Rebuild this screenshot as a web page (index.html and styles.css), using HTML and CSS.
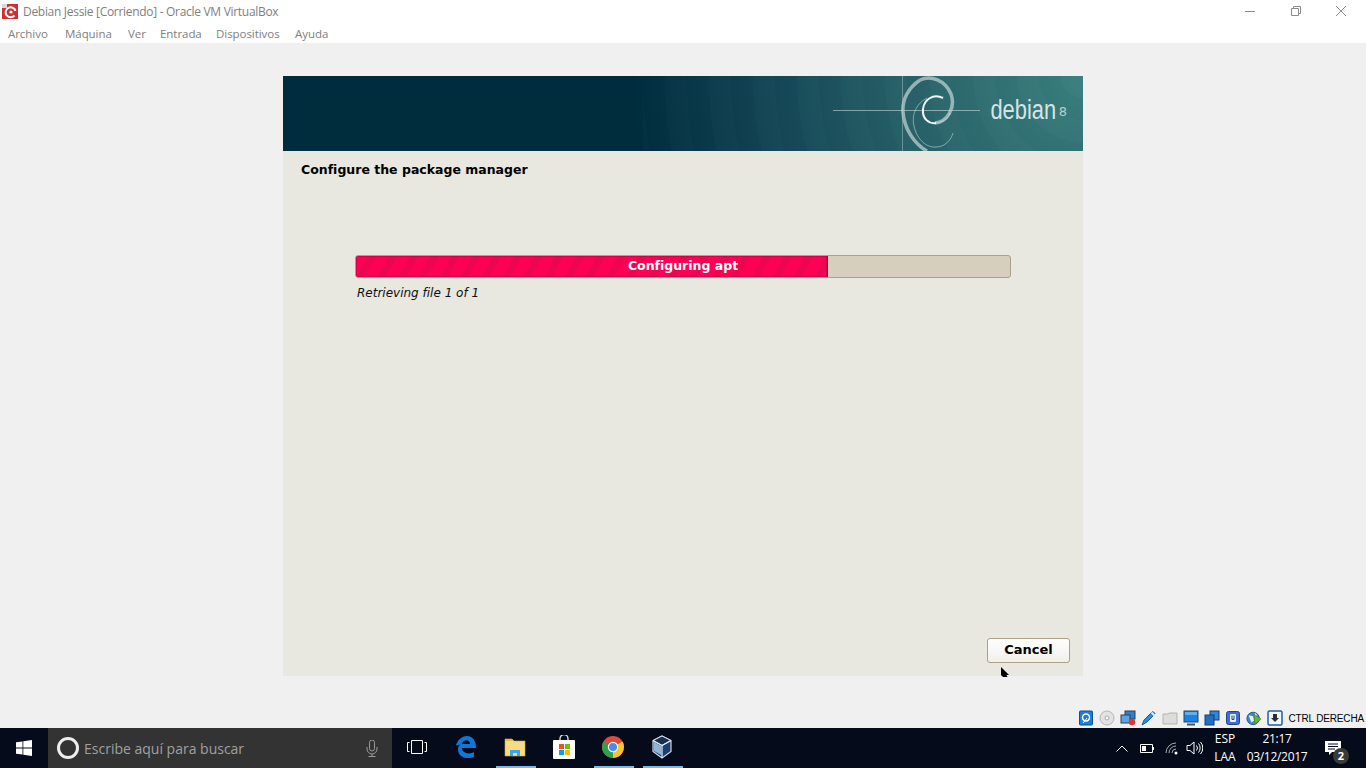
FILE: index.html
```html
<!DOCTYPE html>
<html lang="es">
<head>
    <meta charset="UTF-8" />
    <meta name="viewport" content="width=1366, height=768" />
    <title>Debian Jessie [Corriendo] - Oracle VM VirtualBox</title>
    <link rel="stylesheet" href="styles.css">
</head>
<body>
    <div class="titlebar">
        <svg class="app-icon" width="16" height="16" viewBox="0 0 16 16">
            <rect x="0" y="1" width="16" height="15" fill="#c9322e"/>
            <rect x="0" y="1" width="5" height="4" fill="#d8d8d8"/>
            <path d="M12.500 12.500a5 5 0 1 1 1-4.500" fill="none" stroke="#fff" stroke-width="2"/>
            <circle cx="9" cy="9" r="1.600" fill="#fff"/>
        </svg>
        <span class="title-text">Debian Jessie [Corriendo] - Oracle VM VirtualBox</span>
        <div class="window-buttons">
            <svg class="win-btn" width="12" height="12" viewBox="0 0 12 12"><path d="M1 6.500h10" stroke="#8a8a8a" fill="none"/></svg>
            <svg class="win-btn" width="12" height="12" viewBox="0 0 12 12"><path d="M1.500 3.500h7v7h-7zM3.500 3.500v-2h7v7h-2" stroke="#8a8a8a" fill="none"/></svg>
            <svg class="win-btn" width="12" height="12" viewBox="0 0 12 12"><path d="M1 1l10 10M11 1L1 11" stroke="#8a8a8a" fill="none"/></svg>
        </div>
    </div>

    <div class="menubar">
        <span>Archivo</span>
        <span>Máquina</span>
        <span>Ver</span>
        <span>Entrada</span>
        <span>Dispositivos</span>
        <span>Ayuda</span>
    </div>

    <div class="vm-area">
        <div class="screen">
            <div class="banner">
                <svg class="banner-art" width="800" height="75" viewBox="0 0 800 75">
                    <g fill="none" stroke="#ffffff">
                        <path d="M550 34.500H697" stroke-opacity=".45"/>
                        <path d="M619.500 0V75" stroke-opacity=".3"/>
                        <path d="M637 4C625 12 619 24 620 36C621 52 631 68 644 75" stroke="#b9cfcf" stroke-width="3.500" stroke-opacity=".75"/>
                        <path d="M637 4C648 -1 662 4 668 18C673 32 664 46 652 47" stroke="#c3d6d6" stroke-width="3.500" stroke-opacity=".7"/>
                        <path d="M660 22C650 17 641 24 640 33C639 43 646 48 653 47" stroke="#f2f7f6" stroke-width="2"/>
                        <path d="M653 47C660 46 666 42 667 37" stroke="#dce8e8" stroke-opacity=".5"/>
                        <path d="M644 22C634 27 628 38 631 50C634 64 644 72 653 71C662 71 668 64 670 57" stroke="#cfdede" stroke-opacity=".55"/>
                    </g>
                </svg>
                <span class="brand">debian</span><span class="brand-version">8</span>
            </div>
            <div class="installer">
                <h1>Configure the package manager</h1>
                <div class="progress-block">
                    <div class="progress">
                        <div class="progress-fill"></div>
                        <span class="progress-label">Configuring apt</span>
                    </div>
                    <p class="progress-info">Retrieving file 1 of 1</p>
                </div>
                <div class="actions">
                    <button class="cancel" type="button">Cancel</button>
                </div>
            </div>
        </div>
        <svg class="pointer" width="9" height="10" viewBox="0 0 9 10"><path d="M0 0l8 8H5.500l1 2H2L0 8z" fill="#000"/></svg>
    </div>

    <div class="statusbar">
        <svg class="st-icon" width="16" height="16" viewBox="0 0 16 16"><rect x="1.500" y="1" width="13" height="14" rx="1" fill="#1d7fd6" stroke="#0c4f99"/><circle cx="8" cy="7.500" r="3.500" fill="none" stroke="#fff" stroke-width="1.500"/><path d="M5 13l4-5" stroke="#fff"/></svg>
        <svg class="st-icon" width="16" height="16" viewBox="0 0 16 16"><circle cx="8" cy="8" r="7" fill="#e2e2e2" stroke="#b5b5b5"/><circle cx="8" cy="8" r="2" fill="#f8f8f8" stroke="#aaa"/></svg>
        <svg class="st-icon" width="16" height="16" viewBox="0 0 16 16"><rect x="5" y="1" width="10" height="8" fill="#2f7fd0" stroke="#33414f"/><rect x="1" y="5" width="9" height="8" fill="#5aa3e4" stroke="#33414f"/><circle cx="12" cy="12" r="3.200" fill="#e5342a"/></svg>
        <svg class="st-icon" width="16" height="16" viewBox="0 0 16 16"><path d="M1 15l2-5 8-8c1-1 3 1 3 2l-8 8z" fill="#2b8be0" stroke="#1a5fa8"/><path d="M10.500 2.500l3 3" stroke="#dfeefa" stroke-width="2"/></svg>
        <svg class="st-icon" width="16" height="16" viewBox="0 0 16 16"><path d="M1 14V4h5l1-1h8v11z" fill="#dcdcd8" stroke="#b4b4b0"/></svg>
        <svg class="st-icon" width="16" height="16" viewBox="0 0 16 16"><rect x="1" y="1" width="14" height="11" fill="#1a82e0" stroke="#27475f"/><path d="M2 2h12v3H2z" fill="#5cb0f2"/><path d="M4 14.500h8" stroke="#44566a" stroke-width="2"/></svg>
        <svg class="st-icon" width="16" height="16" viewBox="0 0 16 16"><rect x="6" y="1" width="9" height="9" fill="#2f86db" stroke="#1c3d66"/><rect x="1" y="5" width="9" height="10" fill="#1f6fc4" stroke="#1c3d66"/></svg>
        <svg class="st-icon" width="16" height="16" viewBox="0 0 16 16"><rect x="1.500" y="1.500" width="13" height="13" rx="2" fill="#3d6fd0" stroke="#24438a"/><rect x="5" y="4" width="6" height="8" rx="1" fill="#e9f0fb"/><path d="M7 5.500v4h2v-4" fill="none" stroke="#24438a"/></svg>
        <svg class="st-icon" width="16" height="16" viewBox="0 0 18 18"><circle cx="8" cy="9.500" r="7" fill="#3e86d2" stroke="#1f4f86"/><path d="M3 6l5 1 1 5-3 2zM10 3l3 3-3 1z" fill="#e8eff6"/><path d="M9 5l8 5-7 6z" fill="#6cb52d" stroke="#3c7a12" stroke-width=".6"/></svg>
        <svg class="st-icon" width="16" height="16" viewBox="0 0 16 16"><rect x="1" y="1" width="14" height="14" rx="1.500" fill="#f2f5f9" stroke="#1f5f9e" stroke-width="1.500"/><path d="M6 4h4v4h2l-4 4-4-4h2z" fill="#22303e"/></svg>
        <span class="host-key">CTRL DERECHA</span>
    </div>

    <div class="taskbar">
        <div class="start">
            <svg width="16" height="16" viewBox="0 0 16 16"><path d="M0 2.300l6.500-.9v6.200H0zM7.300 1.300L16 0v7.600H7.300zM0 8.400h6.500v6.200L0 13.700zM7.300 8.400H16V16l-8.700-1.200z" fill="#fff"/></svg>
        </div>
        <div class="search">
            <span class="cortana"></span>
            <span class="search-text">Escribe aquí para buscar</span>
            <svg class="mic" width="12" height="17" viewBox="0 0 12 17"><path d="M3.500 2.500a2.500 2.500 0 0 1 5 0v6a2.500 2.500 0 0 1-5 0zM1 7v2a5 5 0 0 0 10 0V7M6 14v2.500M2.500 16.500h7" fill="none" stroke="#9a9a9a"/></svg>
        </div>
        <div class="task-item">
            <svg width="20" height="14" viewBox="0 0 20 14"><path d="M4.500.5h11v13h-11zM2.500 2.500h-2v9h2M17.500 2.500h2v9h-2" fill="none" stroke="#fff"/></svg>
        </div>
        <div class="task-item edge">
            <svg width="21" height="22" viewBox="0 0 21 22"><path d="M1 9C3 3 8 0 12 0c6 0 9 5 9 12H7c0 5 7 7 12 4v5c-8 3-16 0-16-8 0-2 1-4 3-5-2 1-4 2-5 1zM7 8h8c0-5-7-5-8 0z" fill="#0f78d4"/></svg>
        </div>
        <div class="task-item active">
            <svg width="22" height="20" viewBox="0 0 22 20"><path d="M1 2h7l2 2h11v15H1z" fill="#f8dc84" stroke="#c7a94c" stroke-width=".6"/><path d="M1 2h7l1 2H1z" fill="#e7b93f"/><path d="M6 19v-6h10v6h-3v-3H9v3z" fill="#3aa6e8"/></svg>
        </div>
        <div class="task-item">
            <svg width="24" height="24" viewBox="0 0 24 24"><path d="M8 6V3.500a4 4 0 0 1 8 0V6" fill="none" stroke="#e8e8e8" stroke-width="1.300"/><rect x="1" y="5" width="22" height="19" rx="1" fill="#fff"/><rect x="7" y="9" width="5" height="5" fill="#f25022"/><rect x="13" y="9" width="5" height="5" fill="#7fba00"/><rect x="7" y="15" width="5" height="5" fill="#00a4ef"/><rect x="13" y="15" width="5" height="5" fill="#ffb900"/></svg>
        </div>
        <div class="task-item active">
            <svg width="22" height="22" viewBox="0 0 22 22"><circle cx="11" cy="11" r="11" fill="#dd4b3e"/><path d="M11 11L20.500 5.500A11 11 0 0 1 11 22z" fill="#f6c42d"/><path d="M11 11L11 22A11 11 0 0 1 1.500 5.500z" fill="#2ea14f"/><circle cx="11" cy="11" r="5.200" fill="#fff"/><circle cx="11" cy="11" r="4" fill="#4a8af0"/></svg>
        </div>
        <div class="task-item active">
            <svg width="22" height="24" viewBox="0 0 22 24"><path d="M11 1l9 4.500v11L11 23l-9-6.500v-11z" fill="#1d3f6e" stroke="#cfd8e2" stroke-width="1.200"/><path d="M11 1l9 4.500-9 5-9-5z" fill="#16304f" stroke="#dfe6ee"/><path d="M11 10.500V23M11 10.500L2 5.500M11 10.500l9-5" stroke="#e8edf2" stroke-width="1.200"/><path d="M3 7l7 4v9l-7-4z" fill="#8fb4d8"/></svg>
        </div>

        <div class="tray">
            <svg class="tray-chevron" width="12" height="7" viewBox="0 0 12 7"><path d="M.5 6.500L6 1l5.500 5.500" fill="none" stroke="#fff"/></svg>
            <svg class="tray-battery" width="15" height="9" viewBox="0 0 15 9"><path d="M.5.500h12v8H.5z" fill="none" stroke="#fff"/><path d="M2 2h4v5H2z" fill="#fff"/><path d="M13.500 3v3" stroke="#fff"/></svg>
            <svg class="tray-wifi" width="14" height="14" viewBox="0 0 14 14"><path d="M7 12A4 4 0 0 1 11 8M4 12A7 7 0 0 1 11 5M1 12A10 10 0 0 1 11 2" fill="none" stroke="#a8adb2"/><circle cx="11" cy="12" r="1.500" fill="#fff"/></svg>
            <svg class="tray-volume" width="17" height="14" viewBox="0 0 17 14"><path d="M1 4.500h3L8 1v12L4 9.500H1zM10.500 4.500a4 4 0 0 1 0 5M12.500 2.500a7 7 0 0 1 0 9M14.500 1a9 9 0 0 1 0 12" fill="none" stroke="#fff"/></svg>
            <div class="tray-lang"><span>ESP</span><span>LAA</span></div>
            <div class="tray-clock"><span>21:17</span><span>03/12/2017</span></div>
            <div class="tray-notify">
                <svg width="16" height="15" viewBox="0 0 16 15"><path d="M0 0h16v11H7l-3 3v-3H0z" fill="#fff"/><path d="M3 3h10M3 5.500h10M3 8h7" stroke="#050b1a"/></svg>
                <span class="notify-badge">2</span>
            </div>
        </div>
    </div>
</body>
</html>
```

FILE: styles.css
```css
:root {
    --window-bg: #f0f0f0;
    --taskbar: #050b1a;
    --screen: #e8e7e0;
    --faded: #808080;
    --crimson: #ff0055;
}

* {
    box-sizing: border-box;
}

body {
    margin: 0;
    width: 1366px;
    height: 768px;
    overflow: hidden;
    display: flex;
    flex-direction: column;
    background-color: var(--window-bg);
    font-family: "Open Sans", "Noto Sans", sans-serif;
}

.titlebar {
    height: 22px;
    background-color: #fff;
    display: flex;
    align-items: center;
    padding-left: 2px;
    color: var(--faded);
    font-size: 12px;
}

.app-icon {
    margin-right: 5px;
}

.title-text {
    letter-spacing: -0.3px;
}

.window-buttons {
    margin-left: auto;
    display: flex;
    gap: 33.5px;
    padding-right: 19px;
}

.menubar {
    height: 21px;
    background-color: #fff;
    display: grid;
    grid-template-columns: 57px 63px 32px 56px 79px auto;
    align-items: center;
    padding: 2px 0 0 8px;
    color: var(--faded);
    font-size: 11.5px;
    letter-spacing: -0.05px;
}

.vm-area {
    height: 665px;
    position: relative;
    display: flex;
    justify-content: center;
    padding: 33px 0 0;
}

.screen {
    width: 800px;
    height: 600px;
    display: flex;
    flex-direction: column;
    background-color: var(--screen);
    font-family: "DejaVu Sans", sans-serif;
}

.banner {
    height: 75px;
    position: relative;
    display: flex;
    justify-content: flex-end;
    align-items: center;
    padding-right: 16px;
    color: #d4e4e2;
    background:
        repeating-radial-gradient(circle at 440px 0, rgba(255, 255, 255, 0.012) 0, rgba(255, 255, 255, 0.012) 22px, rgba(0, 0, 0, 0.012) 22px, rgba(0, 0, 0, 0.012) 44px) right top / 440px 100% no-repeat,
        radial-gradient(circle at 800px 0, rgba(62, 132, 130, 0.95) 0, rgba(50, 112, 116, 0.8) 170px, rgba(30, 84, 98, 0.7) 300px, rgba(0, 45, 62, 0) 450px),
        #002d3e;
}

.banner-art {
    position: absolute;
    left: 0;
    top: 0;
}

.brand {
    position: relative;
    font-family: "Liberation Sans", sans-serif;
    font-size: 27px;
    line-height: 1;
    margin: -6px 3px 0 0;
    transform: scaleX(0.81);
    transform-origin: right center;
}

.brand-version {
    position: relative;
    font-family: "DejaVu Sans", sans-serif;
    font-size: 13px;
    font-weight: normal;
    opacity: 0.8;
    margin-bottom: 5px;
}

.installer {
    flex: 1;
    display: flex;
    flex-direction: column;
    padding: 11px 13px 13px 18px;
}

h1 {
    margin: 0;
    font-size: 12.5px;
    line-height: 16px;
    font-weight: bold;
    color: #000;
}

.progress-block {
    width: 656px;
    margin: 77px 0 0 54px;
}

.progress {
    height: 23px;
    position: relative;
    background-color: #d6cfbe;
    border: 1px solid #ad9f88;
    border-radius: 3px;
    display: flex;
    align-items: center;
    justify-content: center;
    overflow: hidden;
}

.progress-fill {
    position: absolute;
    left: 0;
    top: 0;
    bottom: 0;
    width: 472px;
    border-right: 1px solid #a3003c;
    box-shadow: inset 0 0 0 1px rgba(170, 0, 60, 0.45);
    background: repeating-linear-gradient(120deg, var(--crimson) 0, var(--crimson) 11px, #ec0550 11px, #ec0550 18px);
}

.progress-label {
    position: relative;
    color: #fff;
    font-size: 12.5px;
    font-weight: bold;
    line-height: 1;
    margin-top: -1px;
}

.progress-info {
    margin: 7px 0 0 2px;
    font-size: 12px;
    line-height: 16px;
    font-style: italic;
    color: #111;
}

.actions {
    margin-top: auto;
    display: flex;
    justify-content: flex-end;
}

.cancel {
    width: 83px;
    height: 25px;
    padding: 0 0 2px;
    font-family: inherit;
    font-size: 13px;
    font-weight: bold;
    color: #000;
    background: linear-gradient(#ffffff, #f1efe9);
    border: 1px solid #ad9f88;
    border-radius: 3px;
}

.pointer {
    position: absolute;
    left: 1001px;
    top: 624px;
}

.statusbar {
    height: 20px;
    display: flex;
    align-items: center;
    justify-content: flex-end;
    gap: 5px;
    padding-right: 2px;
}

.st-icon {
    flex: none;
}

.host-key {
    font-family: "Liberation Sans", sans-serif;
    font-size: 10px;
    letter-spacing: -0.15px;
    color: #000;
}

.taskbar {
    height: 40px;
    display: flex;
    background-color: var(--taskbar);
    color: #fff;
}

.start {
    width: 48px;
    display: flex;
    align-items: center;
    justify-content: center;
}

.search {
    width: 344px;
    background-color: #333333;
    display: flex;
    align-items: center;
    padding: 0 14px 0 9px;
}

.cortana {
    width: 22px;
    height: 22px;
    border: 3px solid #eee;
    border-radius: 50%;
    margin-right: 5px;
}

.search-text {
    font-size: 14px;
    color: #a0a0a0;
}

.mic {
    margin-left: auto;
}

.task-item {
    width: 49px;
    position: relative;
    display: flex;
    align-items: center;
    justify-content: center;
    padding-bottom: 2px;
}

.task-item.active::after {
    content: "";
    position: absolute;
    left: 6px;
    right: 3px;
    bottom: 0;
    height: 2px;
    background-color: #76b9ed;
}

.tray {
    margin-left: auto;
    display: flex;
    align-items: center;
    padding-right: 11px;
    font-size: 12px;
}

.tray-chevron {
    margin-right: 12px;
}

.tray-battery {
    margin-right: 10px;
}

.tray-wifi {
    margin-right: 7px;
}

.tray-volume {
    margin-right: 6px;
}

.tray-lang,
.tray-clock {
    display: flex;
    flex-direction: column;
    align-items: center;
    line-height: 18px;
}

.tray-lang {
    width: 32px;
}

.tray-clock {
    width: 68px;
    margin-left: 2px;
    letter-spacing: -0.3px;
}

.tray-notify {
    width: 44px;
    height: 40px;
    position: relative;
    display: flex;
    align-items: center;
    justify-content: center;
}

.notify-badge {
    position: absolute;
    left: 22px;
    top: 20px;
    width: 16px;
    height: 16px;
    border-radius: 50%;
    background-color: #3a3a3a;
    font-size: 11px;
    font-weight: bold;
    line-height: 16px;
    text-align: center;
}
```
